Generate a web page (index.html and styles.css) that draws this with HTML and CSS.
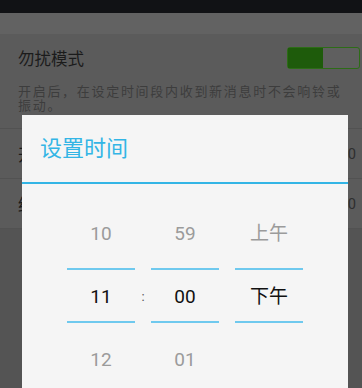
FILE: index.html
```html
<!DOCTYPE html>
<html lang="zh-CN">
<head>
<meta charset="utf-8">
<title>设置时间</title>
<link rel="stylesheet" href="styles.css">
</head>
<body>
<div class="screen">
  <div class="status"></div>
  <div class="appbar"></div>
  <div class="settings">
    <div class="dnd">
      <div class="dnd-head">
        <span class="dnd-title">勿扰模式</span>
        <span class="switch"><span class="switch-on"></span></span>
      </div>
      <p class="dnd-desc">开启后，在设定时间段内收到新消息时不会响铃或振动。</p>
    </div>
    <div class="row"><span class="label">开始时间</span><span class="value">22:00</span></div>
    <div class="row"><span class="label">结束时间</span><span class="value">08:00</span></div>
  </div>
  <div class="rest"></div>

  <div class="dialog">
    <div class="dialog-title">设置时间</div>
    <div class="picker">
      <div class="col">
        <div class="cell upper">10</div>
        <div class="cell mid">11</div>
        <div class="cell lower">12</div>
      </div>
      <div class="sep">:</div>
      <div class="col">
        <div class="cell upper">59</div>
        <div class="cell mid">00</div>
        <div class="cell lower">01</div>
      </div>
      <div class="sep"></div>
      <div class="col">
        <div class="cell upper">上午</div>
        <div class="cell mid">下午</div>
        <div class="cell lower"></div>
      </div>
    </div>
  </div>
</div>
</body>
</html>
```

FILE: styles.css
```css
* { box-sizing: border-box; }
html, body {
  margin: 0;
  padding: 0;
  width: 362px;
  height: 388px;
  overflow: hidden;
  background: #545454;
  font-family: Roboto, "Noto Sans CJK SC", sans-serif;
}
.screen {
  position: relative;
  width: 362px;
  height: 388px;
  display: flex;
  flex-direction: column;
  overflow: hidden;
}
.status {
  height: 13px;
  background: #111215;
  flex: none;
}
.appbar {
  height: 21px;
  background: #626262;
  flex: none;
}
.settings {
  background: #5b5b5b;
  flex: none;
}
.dnd {
  padding: 13px 0 0 18px;
  border-bottom: 1px solid #525252;
  height: 95px;
}
.dnd-head {
  display: flex;
  justify-content: space-between;
  align-items: center;
  height: 26px;
}
.dnd-title {
  font-size: 16.5px;
  color: #1b1b1b;
  line-height: 26px;
}
.switch {
  align-self: flex-start;
  width: 73px;
  height: 22px;
  border: 1px solid #2d6c17;
  border-radius: 3px;
  background: #5f5f5f;
  margin-right: 2px;
  display: flex;
}
.switch-on {
  width: 35px;
  height: 100%;
  background: #1e5b0b;
}
.dnd-desc {
  margin: 12px 0 0 0;
  width: 328px;
  font-size: 13px;
  letter-spacing: 1.7px;
  line-height: 14px;
  color: #3d3d3d;
}
.row {
  height: 50px;
  padding: 0 6px 0 18px;
  display: flex;
  justify-content: space-between;
  align-items: center;
  border-bottom: 1px solid #525252;
}
.row .label {
  font-size: 16.5px;
  color: #1b1b1b;
}
.row .value {
  font-size: 14.7px;
  color: #2e2e2e;
}
.rest {
  flex: 1;
  background: #545454;
}
.dialog {
  position: absolute;
  left: 22px;
  top: 115px;
  width: 326px;
  height: 290px;
  background: #f5f5f5;
}
.dialog-title {
  height: 69px;
  padding-left: 18px;
  line-height: 67px;
  font-size: 22px;
  color: #33b5e5;
  border-bottom: 2px solid #33b5e5;
}
.picker {
  display: flex;
  justify-content: center;
  padding-top: 16px;
}
.col {
  width: 68px;
  display: flex;
  flex-direction: column;
}
.cell {
  text-align: center;
  font-size: 19px;
}
.upper {
  height: 68px;
  line-height: 68px;
  color: #9b9b9b;
}
.mid {
  height: 55px;
  padding-top: 2px;
  line-height: 49px;
  color: #111111;
  border-top: 2px solid #6fc9ee;
  border-bottom: 2px solid #6fc9ee;
}
.lower {
  height: 74px;
  line-height: 74px;
  color: #9b9b9b;
}
.sep {
  width: 16px;
  padding-top: 70px;
  line-height: 53px;
  text-align: center;
  font-size: 13px;
  color: #555555;
}
```
